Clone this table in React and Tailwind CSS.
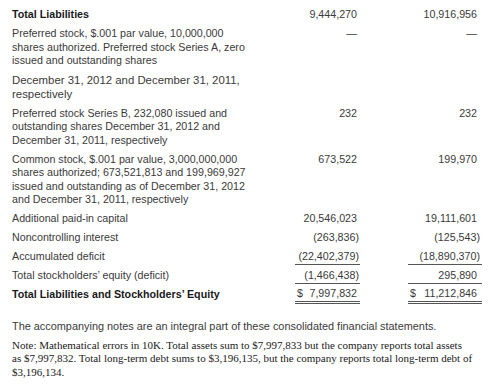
import React from 'react';

const rows = [
    { label: ['Total Liabilities'], bold: true, a: '9,444,270', b: '10,916,956' },
    { label: ['Preferred stock, $.001 par value, 10,000,000', 'shares authorized. Preferred stock Series A, zero', 'issued and outstanding shares'], a: '—', b: '—' },
    { label: ['December 31, 2012 and December 31, 2011,', 'respectively'], big: true },
    { label: ['Preferred stock Series B, 232,080 issued and', 'outstanding shares December 31, 2012 and', 'December 31, 2011, respectively'], a: '232', b: '232' },
    { label: ['Common stock, $.001 par value, 3,000,000,000', 'shares authorized; 673,521,813 and 199,969,927', 'issued and outstanding as of December 31, 2012', 'and December 31, 2011, respectively'], a: '673,522', b: '199,970' },
    { label: ['Additional paid-in capital'], a: '20,546,023', b: '19,111,601' },
    { label: ['Noncontrolling interest'], a: '(263,836)', b: '(125,543)' },
    { label: ['Accumulated deficit'], a: '(22,402,379)', b: '(18,890,370)', line: 'single' },
    { label: ['Total stockholders’ equity (deficit)'], a: '(1,466,438)', b: '295,890', line: 'single' },
    { label: ['Total Liabilities and Stockholders’ Equity'], bold: true, a: '7,997,832', b: '11,212,846', dollar: true, line: 'double' },
];

function Cell({ value, col, line, dollar }) {
    const paren = value && value.endsWith(')');
    const pad = col === 1 ? (paren ? 'pr-[1px]' : 'pr-[3px]') : (paren ? 'pr-[2px]' : 'pr-[5px]');
    const border = line === 'single'
        ? 'border-b border-[#555]'
        : line === 'double'
            ? 'border-b-[3px] border-double border-[#555] -mt-[1px]'
            : '';
    return (
        <div className={`${col === 1 ? 'w-[65px]' : 'w-[74px] ml-[48px]'} shrink-0`}>
            <div className={`flex ${dollar ? 'justify-between' : 'justify-end'} ${pad} ${border} font-normal text-[#3a3a3a]`}>
                {dollar && <span className="pl-[2px]">$</span>}
                <span>{value}</span>
            </div>
        </div>
    );
}

export default function App() {
    return (
        <div className="w-[491px] h-[384px] bg-white pl-[12px] pt-[8px] overflow-hidden">
            <div className="font-['Liberation_Sans',Arial,sans-serif] text-[10.7px] leading-[13.5px] text-[#3a3a3a]">
                {rows.map((row, idx) => (
                    <div key={idx} className={`flex items-start ${row.label.length === 1 ? 'h-[19px]' : 'pb-[5.5px]'}`}>
                        <div className={`w-[283px] shrink-0 ${row.bold ? 'font-bold text-[#1a1a1a]' : ''} ${row.big ? 'text-[11.4px] leading-[14px]' : ''}`}>
                            {row.label.map((l, i) => (
                                <div key={i} className="whitespace-nowrap">{l}</div>
                            ))}
                        </div>
                        {row.a && (
                            <>
                                <Cell value={row.a} col={1} line={row.line} dollar={row.dollar} />
                                <Cell value={row.b} col={2} line={row.line} dollar={row.dollar} />
                            </>
                        )}
                    </div>
                ))}
            </div>

            <p className="mt-[13px] font-['Liberation_Sans',Arial,sans-serif] text-[10.9px] leading-[13.5px] text-[#3a3a3a] whitespace-nowrap">
                The accompanying notes are an integral part of these consolidated financial statements.
            </p>

            <div className="mt-[5px] font-['Liberation_Serif','Times_New_Roman',serif] text-[11px] leading-[13.5px] text-[#1a1a1a]">
                <div className="whitespace-nowrap">Note: Mathematical errors in 10K. Total assets sum to $7,997,833 but the company reports total assets</div>
                <div className="whitespace-nowrap">as $7,997,832. Total long-term debt sums to $3,196,135, but the company reports total long-term debt of</div>
                <div className="whitespace-nowrap">$3,196,134.</div>
            </div>
        </div>
    );
}
